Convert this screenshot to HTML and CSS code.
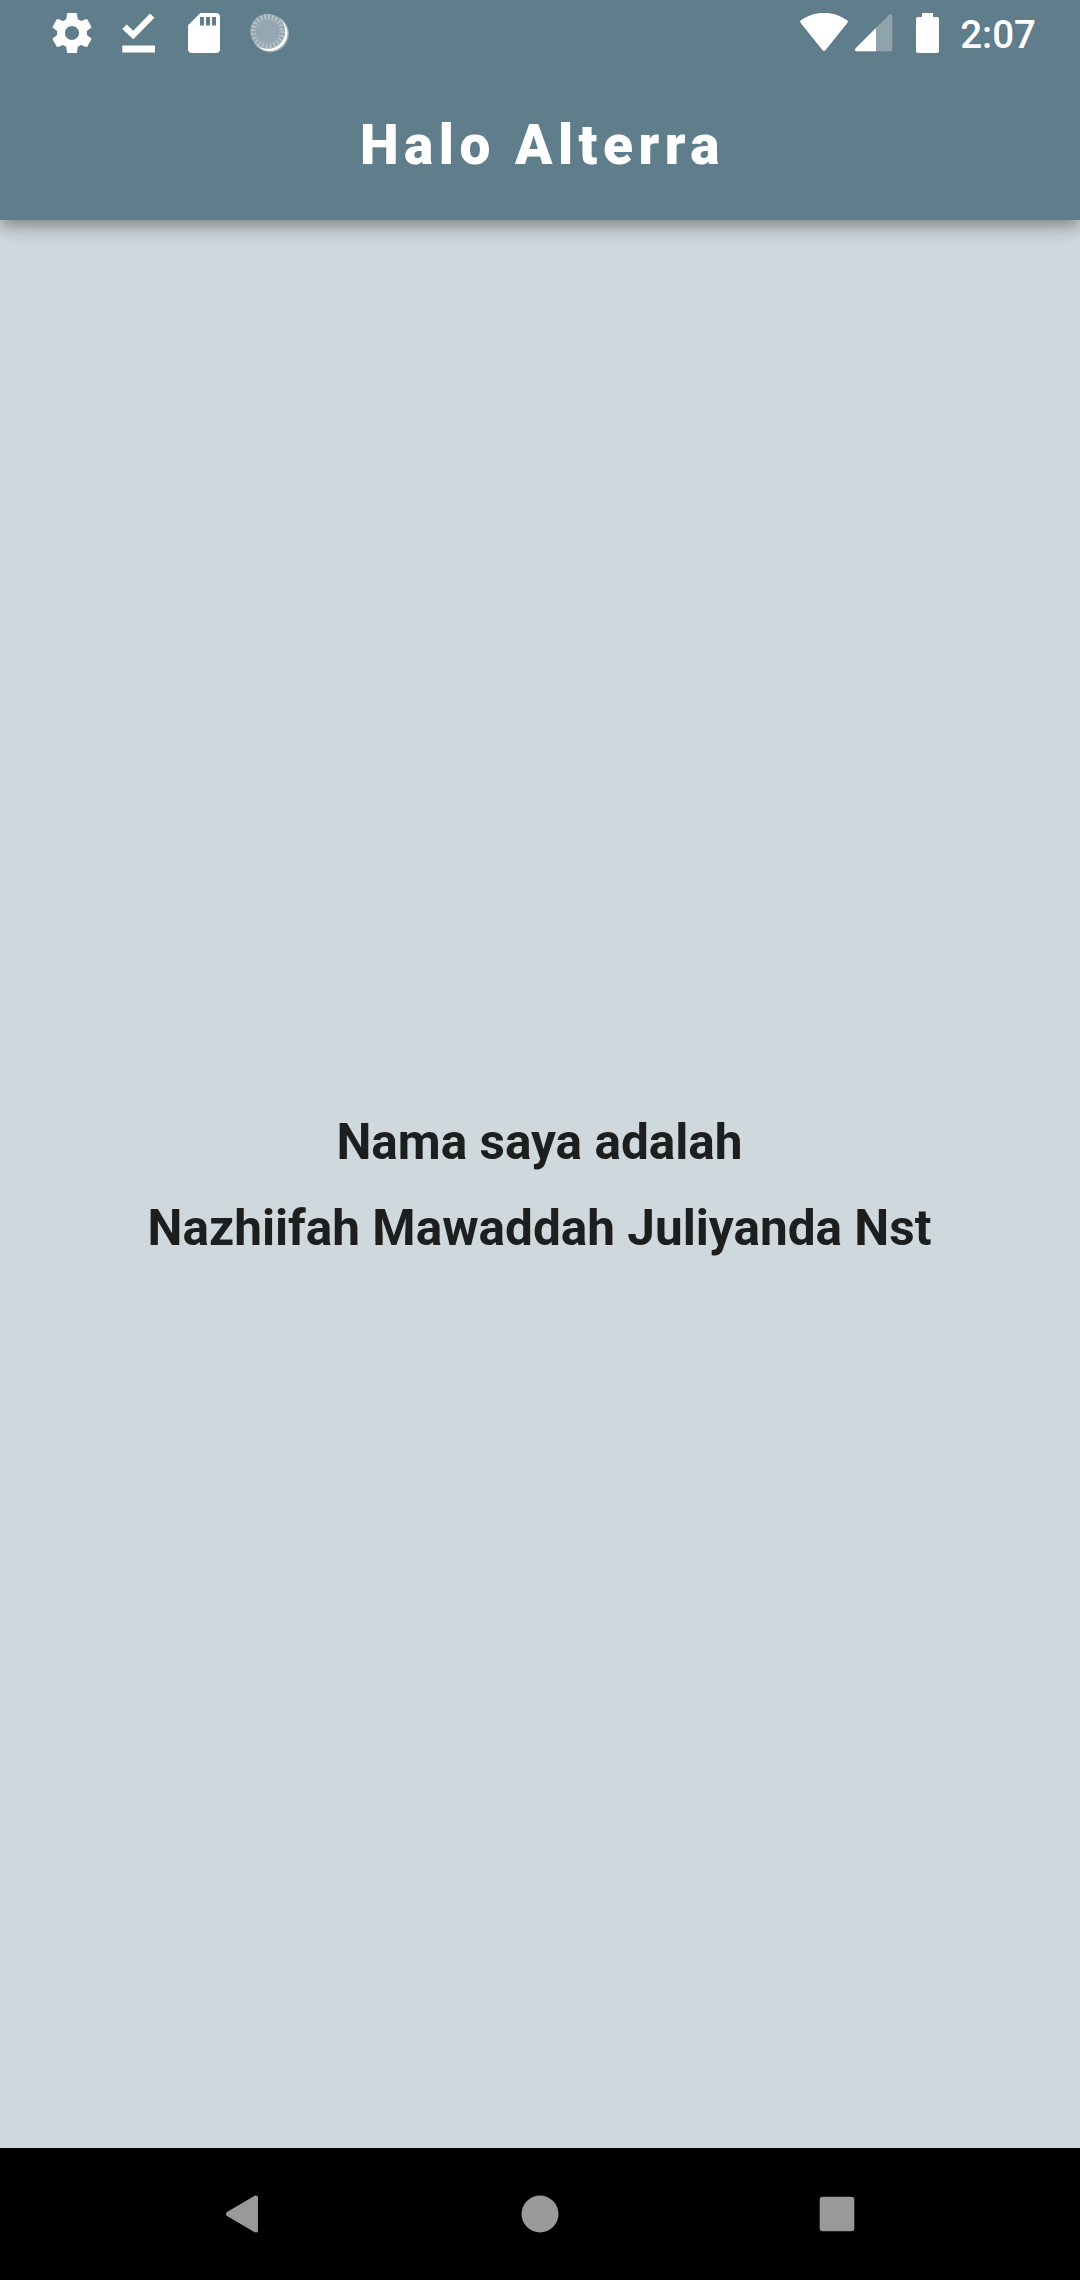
FILE: index.html
```html
<!DOCTYPE html>
<html lang="id">
<head>
<meta charset="utf-8">
<title>Halo Alterra</title>
<link rel="stylesheet" href="styles.css">
</head>
<body>
<div class="screen">
  <header class="top">
    <div class="status-bar">
      <div class="status-group">
        <svg class="icon" viewBox="0 0 24 24" fill="#fff"><path d="M19.43 12.98c.04-.32.07-.64.07-.98s-.03-.66-.07-.98l2.11-1.65c.19-.15.24-.42.12-.64l-2-3.46c-.12-.22-.39-.3-.61-.22l-2.49 1c-.52-.4-1.08-.73-1.69-.98l-.38-2.65C14.46 2.18 14.25 2 14 2h-4c-.25 0-.46.18-.49.42l-.38 2.65c-.61.25-1.17.59-1.69.98l-2.49-1c-.23-.09-.49 0-.61.22l-2 3.46c-.13.22-.07.49.12.64l2.11 1.65c-.04.32-.07.65-.07.98s.03.66.07.98l-2.11 1.65c-.19.15-.24.42-.12.64l2 3.46c.12.22.39.3.61.22l2.49-1c.52.4 1.08.73 1.69.98l.38 2.65c.03.24.24.42.49.42h4c.25 0 .46-.18.49-.42l.38-2.65c.61-.25 1.17-.59 1.69-.98l2.49 1c.23.09.49 0 .61-.22l2-3.46c.12-.22.07-.49-.12-.64l-2.11-1.65zM12 15.500c-1.930 0-3.500-1.570-3.500-3.500s1.570-3.500 3.500-3.500 3.500 1.570 3.500 3.500-1.570 3.500-3.500 3.500z"/></svg>
        <svg class="icon" viewBox="0 0 48 48" fill="#fff"><path d="M8.300 20l4.400-4.600 6.600 6.400L36 4.400l4.400 4.300-21.100 21.600zM8.300 36.500H41v7H8.300z"/></svg>
        <svg class="icon" viewBox="0 0 48 48" fill="#fff"><path fill-rule="evenodd" d="M20.300 4H36a4 4 0 0 1 4 4v32a4 4 0 0 1-4 4H12a4 4 0 0 1-4-4V16.300zM20 8v8.500h4V8zm6 0v8.500h4V8zm6 0v8.500h4V8z"/></svg>
        <svg class="icon" viewBox="0 0 48 48"><circle cx="24.300" cy="24.700" r="18.700" fill="#93a6af"/><circle cx="23.800" cy="24.300" r="17.700" fill="#fff"/><circle cx="21.700" cy="22.300" r="17.500" fill="#95a8b1"/><circle cx="21.700" cy="22.300" r="14.500" fill="none" stroke="#b7c4ca" stroke-width="5" stroke-dasharray="1.600 2.196"/></svg>
      </div>
      <div class="status-group status-right">
        <svg class="wifi" viewBox="0 0 48 40" fill="#fff"><path d="M.7 7.600C7.500 2.400 15.500 0 24 0s16.500 2.400 23.300 7.600c.7.600.8 1.500.2 2.200L25.600 37.100c-.9 1.200-2.300 1.200-3.200 0L.5 9.800C-.1 9.100 0 8.200.7 7.600z"/></svg>
        <svg class="signal" viewBox="0 0 38 38"><path d="M34.200.7c1.100-1.100 3.100-.4 3.100 1.300v33.500c0 1.100-.8 1.800-1.800 1.800H1.900c-1.700 0-2.400-1.800-1.200-3z" fill="#fff" fill-opacity=".3"/><path d="M21 13.900v23.400H1.900c-1.700 0-2.400-1.800-1.200-3z" fill="#fff"/></svg>
        <svg class="battery" viewBox="0 0 23 40" fill="#fff"><path d="M6 0h11v4h4a2 2 0 0 1 2 2v32a2 2 0 0 1-2 2H2a2 2 0 0 1-2-2V6a2 2 0 0 1 2-2h4z"/></svg>
        <span class="clock">2:07</span>
      </div>
    </div>
    <h1 class="title">Halo Alterra</h1>
  </header>
  <main class="content">
    <p class="line">Nama saya adalah</p>
    <p class="line">Nazhiifah Mawaddah Juliyanda Nst</p>
  </main>
  <nav class="nav-bar">
    <svg class="nav-icon" viewBox="0 0 48 48" fill="#999"><path d="M35.300 5.900c1.600-1 3.700-.3 3.700 1.700v32.800c0 2-2.100 2.700-3.700 1.700L8.400 26.300c-1.900-1.100-1.900-3.500 0-4.600z"/></svg>
    <svg class="nav-icon" viewBox="0 0 48 48" fill="#999"><circle cx="24" cy="24" r="18.500"/></svg>
    <svg class="nav-icon" viewBox="0 0 48 48" fill="#999"><rect x="6.700" y="6.700" width="34.600" height="34.600" rx="3"/></svg>
  </nav>
</div>
</body>
</html>
```
FILE: styles.css
```css
body {
  margin: 0;
  font-family: Roboto, "Liberation Sans", sans-serif;
}

svg {
  display: block;
  flex: none;
}

.screen {
  display: flex;
  flex-direction: column;
  width: 1080px;
  height: 2280px;
  overflow: hidden;
  background: #cfd8dd;
}

.top {
  z-index: 1;
  display: flex;
  flex-direction: column;
  height: 220px;
  background: #607d8b;
  box-shadow:
    0 5.5px 11px -2.75px rgba(0, 0, 0, 0.2),
    0 11px 13.75px 0 rgba(0, 0, 0, 0.14),
    0 2.75px 27.500px 0 rgba(0, 0, 0, 0.1);
}

.status-bar {
  display: flex;
  justify-content: space-between;
  height: 66px;
  box-sizing: border-box;
  padding: 0 44px 0 48px;
}

.status-group {
  display: flex;
  align-items: center;
  gap: 18px;
}

.status-right {
  gap: 0;
}

.icon {
  width: 48px;
  height: 48px;
}

.wifi {
  width: 48px;
  height: 40px;
}

.signal {
  width: 38px;
  height: 38px;
  margin-left: 7px;
}

.battery {
  width: 23px;
  height: 40px;
  margin: 0 21px 0 23px;
}

.clock {
  padding-top: 4px;
  color: #fff;
  font-size: 38.5px;
  font-weight: 500;
  line-height: 62px;
}

.title {
  margin: 0;
  padding: 4px 0 0 5px;
  color: #fff;
  font-size: 55px;
  font-weight: 900;
  letter-spacing: 5.5px;
  line-height: 150px;
  text-align: center;
}

.content {
  display: flex;
  flex: 1;
  flex-direction: column;
  align-items: center;
  justify-content: center;
  gap: 28px;
  padding: 2px 1px 0 0;
}

.line {
  margin: 0;
  color: #1d1f1e;
  font-size: 49.5px;
  font-weight: 700;
  line-height: 58px;
}

.nav-bar {
  display: flex;
  align-items: center;
  justify-content: center;
  gap: 249px;
  height: 132px;
  background: #000;
}

.nav-icon {
  width: 48px;
  height: 48px;
}
```
